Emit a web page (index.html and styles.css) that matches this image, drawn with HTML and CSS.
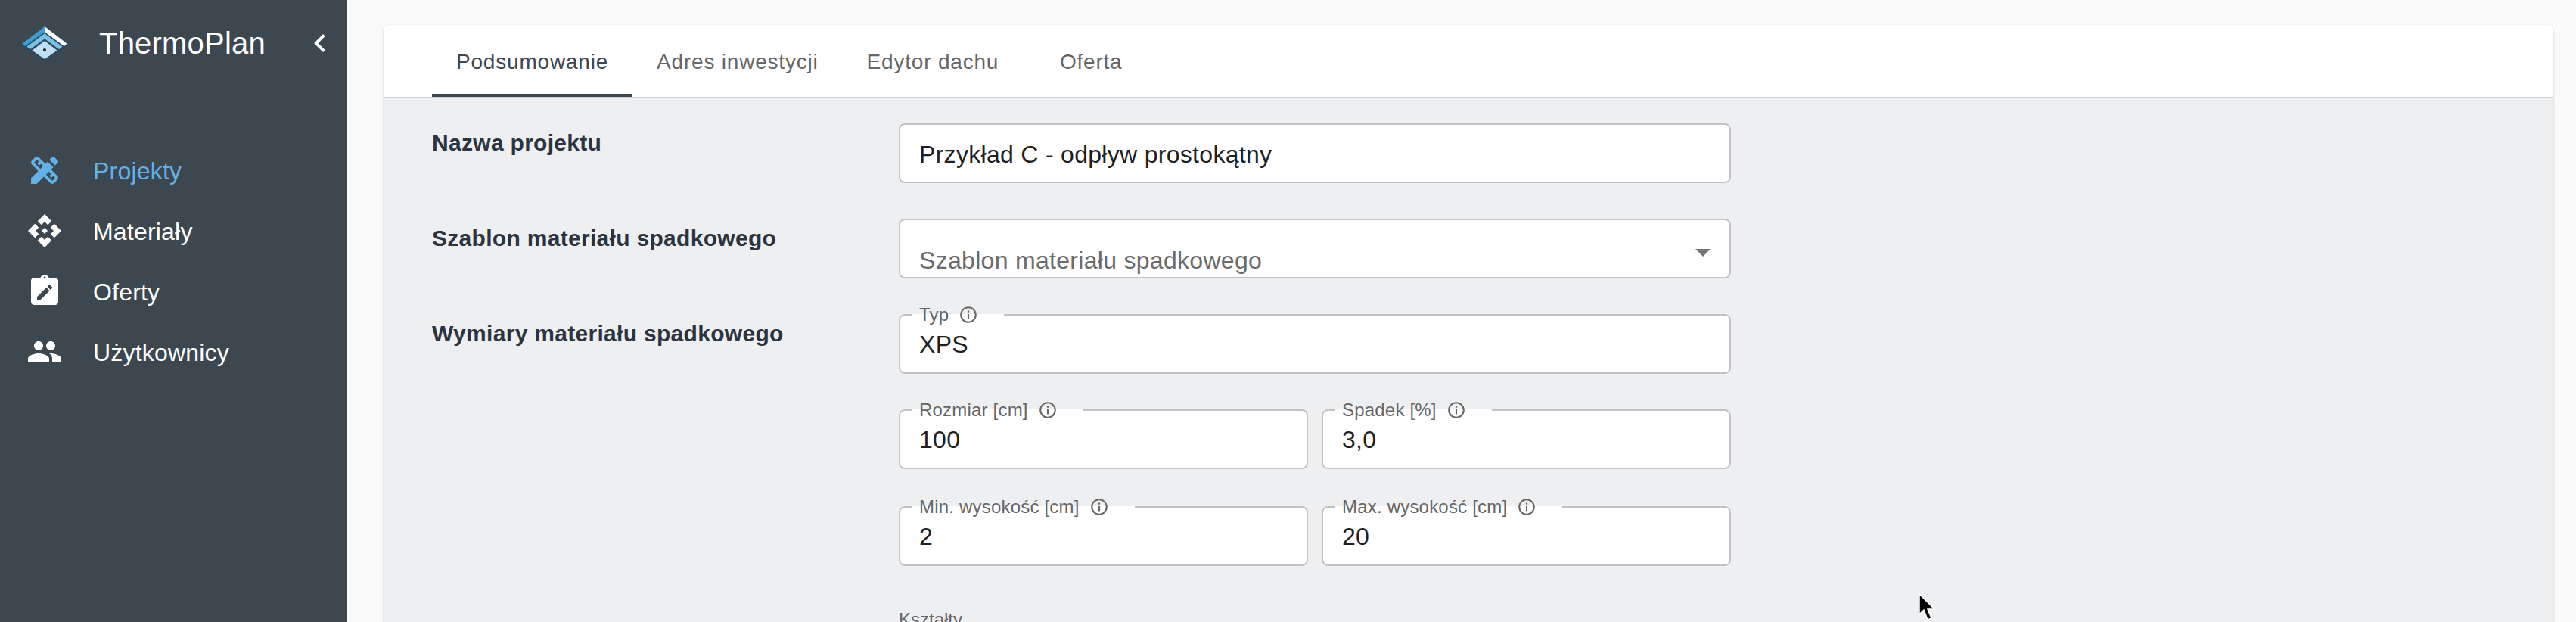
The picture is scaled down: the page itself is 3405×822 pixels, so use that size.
FILE: index.html
```html
<!DOCTYPE html>
<html lang="pl">
<head>
    <meta charset="UTF-8">
    <title>ThermoPlan</title>
    <link rel="stylesheet" href="styles.css">
</head>
<body>
    <aside class="sidebar">
        <div class="brand">
            <svg class="logo" viewBox="0 0 60 44" width="60" height="44">
                <path d="M30 0 L0 23 L4 27 L30 8 Z" fill="#3a9fd0"/>
                <path d="M30 0 L60 23 L56 27 L30 8 Z" fill="#ffffff"/>
                <path d="M30 9 L6 27 L11 31 L30 17 L49 31 L54 27 Z" fill="#7cc0e4"/>
                <path d="M30 19 L13 32 L30 44 L47 32 Z" fill="#bfe0f3"/>
                <path d="M0 23 L4 27 L30 8 L56 27 L60 23 M6 27 L11 31 L30 17 L49 31 L54 27 M13 32 L30 44 L47 32" fill="none" stroke="#1d4a6b" stroke-width="1.4"/>
                <circle cx="30" cy="31" r="2" fill="#12202c"/>
            </svg>
            <span class="brand-name">ThermoPlan</span>
            <svg class="collapse" viewBox="0 0 24 24" width="48" height="48"><path d="M15.41 7.41L14 6l-6 6 6 6 1.41-1.41L10.83 12z"/></svg>
        </div>
        <nav class="nav">
            <a class="nav-item active">
                <svg viewBox="0 0 24 24" width="48" height="48"><path d="M16.24,11.51l1.57-1.57l-3.75-3.75l-1.57,1.57L8.35,3.63c-0.78-0.78-2.05-0.78-2.83,0l-1.9,1.9c-0.78,0.78-0.78,2.05,0,2.83l4.13,4.13L3,17.25V21h3.75l4.76-4.76l4.13,4.13c0.95,0.95,2.23,0.6,2.83,0l1.9-1.9c0.78-0.78,0.78-2.05,0-2.83L16.24,11.51z M9.18,11.07L5.04,6.94l1.89-1.9c0,0,0,0,0,0l1.27,1.27L7.02,7.5l1.41,1.41l1.19-1.2l1.45,1.45L9.18,11.07z M17.06,18.96l-4.13-4.13l1.9-1.9l1.45,1.45l-1.19,1.19l1.41,1.41l1.19-1.19l1.27,1.27L17.06,18.96z M20.71,7.04c0.39-0.39,0.39-1.02,0-1.41l-2.34-2.34c-0.47-0.47-1.12-0.29-1.41,0l-1.83,1.83l3.75,3.75L20.71,7.04z"/></svg>
                <span>Projekty</span>
            </a>
            <a class="nav-item">
                <svg viewBox="0 0 24 24" width="48" height="48"><path d="M14,12l-2,2l-2-2l2-2L14,12z M12,6l2.12,2.12l2.5-2.5L12,1L7.38,5.62l2.5,2.5L12,6z M6,12l2.12-2.12l-2.5-2.5L1,12l4.62,4.62l2.5-2.5L6,12z M18,12l-2.12,2.12l2.5,2.5L23,12l-4.62-4.62l-2.5,2.5L18,12z M12,18l-2.12-2.12l-2.5,2.5L12,23l4.62-4.62l-2.5-2.5L12,18z"/></svg>
                <span>Materiały</span>
            </a>
            <a class="nav-item">
                <svg viewBox="0 0 24 24" width="48" height="48">
                    <path d="M19 3h-4.18C14.4 1.84 13.3 1 12 1s-2.4.84-2.82 2H5c-1.1 0-2 .9-2 2v14c0 1.1.9 2 2 2h14c1.1 0 2-.9 2-2V5c0-1.1-.9-2-2-2z"/>
                    <circle class="cut" cx="12" cy="3" r="0.7"/>
                    <path class="cut" transform="translate(5.3,6) scale(.56)" d="M3 17.25V21h3.75L17.81 9.94l-3.75-3.75L3 17.25zM20.71 7.04c.39-.39.39-1.02 0-1.41l-2.34-2.34c-.39-.39-1.02-.39-1.41 0l-1.83 1.83 3.75 3.75 1.83-1.83z"/>
                </svg>
                <span>Oferty</span>
            </a>
            <a class="nav-item">
                <svg viewBox="0 0 24 24" width="48" height="48"><path d="M16 11c1.66 0 2.99-1.34 2.99-3S17.66 5 16 5c-1.66 0-3 1.34-3 3s1.34 3 3 3zm-8 0c1.66 0 2.99-1.34 2.99-3S9.66 5 8 5C6.34 5 5 6.34 5 8s1.34 3 3 3zm0 2c-2.33 0-7 1.17-7 3.5V19h14v-2.5c0-2.33-4.67-3.5-7-3.5zm8 0c-.29 0-.62.02-.97.05 1.16.84 1.97 1.97 1.97 3.45V19h6v-2.5c0-2.33-4.67-3.5-7-3.5z"/></svg>
                <span>Użytkownicy</span>
            </a>
        </nav>
    </aside>

    <main class="main">
        <div class="card">
            <div class="tabs">
                <a class="tab active">Podsumowanie</a>
                <a class="tab">Adres inwestycji</a>
                <a class="tab">Edytor dachu</a>
                <a class="tab">Oferta</a>
            </div>
            <div class="content">
                <div class="form-row">
                    <div class="row-label">Nazwa projektu</div>
                    <div class="field full"><input class="field-input" type="text" value="Przykład C - odpływ prostokątny"></div>
                </div>
                <div class="form-row">
                    <div class="row-label">Szablon materiału spadkowego</div>
                    <div class="field full select">
                        <span class="placeholder">Szablon materiału spadkowego</span>
                        <svg class="arrow" viewBox="0 0 24 24" width="48" height="48"><path d="M7 10l5 5 5-5z"/></svg>
                    </div>
                </div>
                <div class="form-row">
                    <div class="row-label">Wymiary materiału spadkowego</div>
                    <div class="fields">
                        <fieldset class="field full">
                            <legend class="legend">Typ <svg class="info" viewBox="0 0 24 24" width="26" height="26"><path d="M11 7h2v2h-2zm0 4h2v6h-2zm1-9C6.48 2 2 6.48 2 12s4.48 10 10 10 10-4.48 10-10S17.52 2 12 2zm0 18c-4.41 0-8-3.59-8-8s3.59-8 8-8 8 3.59 8 8-3.59 8-8 8z"/></svg></legend>
                            <input class="field-input" type="text" value="XPS">
                        </fieldset>
                        <div class="pair">
                            <fieldset class="field">
                                <legend class="legend">Rozmiar [cm] <svg class="info" viewBox="0 0 24 24" width="26" height="26"><path d="M11 7h2v2h-2zm0 4h2v6h-2zm1-9C6.48 2 2 6.48 2 12s4.48 10 10 10 10-4.48 10-10S17.52 2 12 2zm0 18c-4.41 0-8-3.59-8-8s3.59-8 8-8 8 3.59 8 8-3.59 8-8 8z"/></svg></legend>
                                <input class="field-input" type="text" value="100">
                            </fieldset>
                            <fieldset class="field">
                                <legend class="legend">Spadek [%] <svg class="info" viewBox="0 0 24 24" width="26" height="26"><path d="M11 7h2v2h-2zm0 4h2v6h-2zm1-9C6.48 2 2 6.48 2 12s4.48 10 10 10 10-4.48 10-10S17.52 2 12 2zm0 18c-4.41 0-8-3.59-8-8s3.59-8 8-8 8 3.59 8 8-3.59 8-8 8z"/></svg></legend>
                                <input class="field-input" type="text" value="3,0">
                            </fieldset>
                        </div>
                        <div class="pair last">
                            <fieldset class="field">
                                <legend class="legend">Min. wysokość [cm] <svg class="info" viewBox="0 0 24 24" width="26" height="26"><path d="M11 7h2v2h-2zm0 4h2v6h-2zm1-9C6.48 2 2 6.48 2 12s4.48 10 10 10 10-4.48 10-10S17.52 2 12 2zm0 18c-4.41 0-8-3.59-8-8s3.59-8 8-8 8 3.59 8 8-3.59 8-8 8z"/></svg></legend>
                                <input class="field-input" type="text" value="2">
                            </fieldset>
                            <fieldset class="field">
                                <legend class="legend">Max. wysokość [cm] <svg class="info" viewBox="0 0 24 24" width="26" height="26"><path d="M11 7h2v2h-2zm0 4h2v6h-2zm1-9C6.48 2 2 6.48 2 12s4.48 10 10 10 10-4.48 10-10S17.52 2 12 2zm0 18c-4.41 0-8-3.59-8-8s3.59-8 8-8 8 3.59 8 8-3.59 8-8 8z"/></svg></legend>
                                <input class="field-input" type="text" value="20">
                            </fieldset>
                        </div>
                        <div class="shapes-label">Kształty</div>
                    </div>
                </div>
            </div>
        </div>
    </main>

    <svg class="cursor" viewBox="0 0 24 38" width="24" height="38"><path d="M2 1 L2 28 L8 22 L13 35 L18 33 L13 21 L22 21 Z" fill="#000" stroke="#fff" stroke-width="1.5"/></svg>
</body>
</html>
```

FILE: styles.css
```css
html, body {
    height: 100%;
}

body {
    margin: 0;
    display: flex;
    height: 822px;
    overflow: hidden;
    background-color: #fafafa;
    font-family: "Liberation Sans", Arial, sans-serif;
}

.sidebar {
    width: 459px;
    flex-shrink: 0;
    background-color: #3c4750;
    color: #fff;
}

.brand {
    display: flex;
    align-items: center;
    height: 114px;
    padding-left: 29px;
}

.logo {
    flex-shrink: 0;
}

.brand-name {
    margin-left: 42px;
    font-size: 40px;
    letter-spacing: 0.2px;
}

.collapse {
    margin-left: 48px;
    fill: #fff;
}

.nav {
    display: flex;
    flex-direction: column;
    margin-top: 71px;
}

.nav-item {
    display: flex;
    align-items: center;
    height: 80px;
    padding-left: 35px;
    gap: 40px;
    font-size: 32px;
    letter-spacing: 0.2px;
    fill: #fff;
}

.nav-item span {
    padding-top: 2px;
}

.nav-item.active {
    color: #64b1e8;
    fill: #64b1e8;
}

.nav-item .cut {
    fill: #3c4750;
}

.main {
    flex: 1;
    padding: 33px 30px 0 48px;
    min-width: 0;
}

.card {
    height: 900px;
    background-color: #edeff1;
    border-radius: 8px 8px 0 0;
    box-shadow: 0 1px 3px rgba(0, 0, 0, 0.2);
    overflow: hidden;
}

.tabs {
    display: flex;
    height: 95px;
    padding-left: 64px;
    background-color: #fff;
    border-bottom: 2px solid #ced1d4;
}

.tab {
    display: flex;
    align-items: center;
    justify-content: center;
    box-sizing: border-box;
    min-width: 180px;
    padding: 3px 32px 0;
    font-size: 28px;
    letter-spacing: 0.8px;
    color: #666;
}

.tab.active {
    color: #3c4750;
    box-shadow: inset 0 -4px 0 #3c4750;
}

.content {
    padding: 33px 64px 0;
}

.form-row {
    display: flex;
    margin-bottom: 47px;
}

.row-label {
    width: 617px;
    flex-shrink: 0;
    padding-top: 4px;
    font-size: 30px;
    font-weight: 700;
    letter-spacing: 0.3px;
    line-height: 44px;
    color: #2b3440;
}

.fields {
    display: flex;
    flex-direction: column;
    gap: 47px;
    width: 1100px;
}

.pair {
    display: flex;
    gap: 18px;
}

.pair.last {
    margin-top: 2px;
}

.field {
    position: relative;
    flex: 1;
    height: 79px;
    margin: 0;
    padding: 0;
    min-width: 0;
    box-sizing: border-box;
    background-color: #fff;
    border: 2px solid #c2c2c2;
    border-radius: 8px;
}

.field.full {
    width: 1100px;
    flex: none;
}

/* the legend sits across the top border, so the box grows by half its height */
fieldset.field {
    height: 92px;
    margin-top: -13px;
}

.field-input {
    display: block;
    width: 100%;
    height: 75px;
    padding: 4px 25px 0;
    box-sizing: border-box;
    border: none;
    outline: none;
    background: transparent;
    font-family: inherit;
    font-size: 32px;
    letter-spacing: 0.3px;
    color: #1f1f1f;
}

fieldset .field-input {
    height: 52px;
    padding-top: 0;
}

.legend {
    display: flex;
    align-items: center;
    gap: 6px;
    margin-left: 15px;
    padding: 0 34px 0 10px;
    height: 27px;
    font-size: 24px;
    letter-spacing: 0.2px;
    color: #666;
    white-space: pre;
}

.info {
    fill: #666;
}

.select {
    display: flex;
    align-items: center;
}

.placeholder {
    padding: 31px 0 0 25px;
    font-size: 32px;
    letter-spacing: 0.3px;
    color: #6b6b6b;
}

.arrow {
    position: absolute;
    right: 11px;
    top: 18px;
    fill: #757575;
}

.shapes-label {
    margin-top: 10px;
    font-size: 24px;
    color: #666;
}

.cursor {
    position: absolute;
    left: 2535px;
    top: 784px;
}
```
